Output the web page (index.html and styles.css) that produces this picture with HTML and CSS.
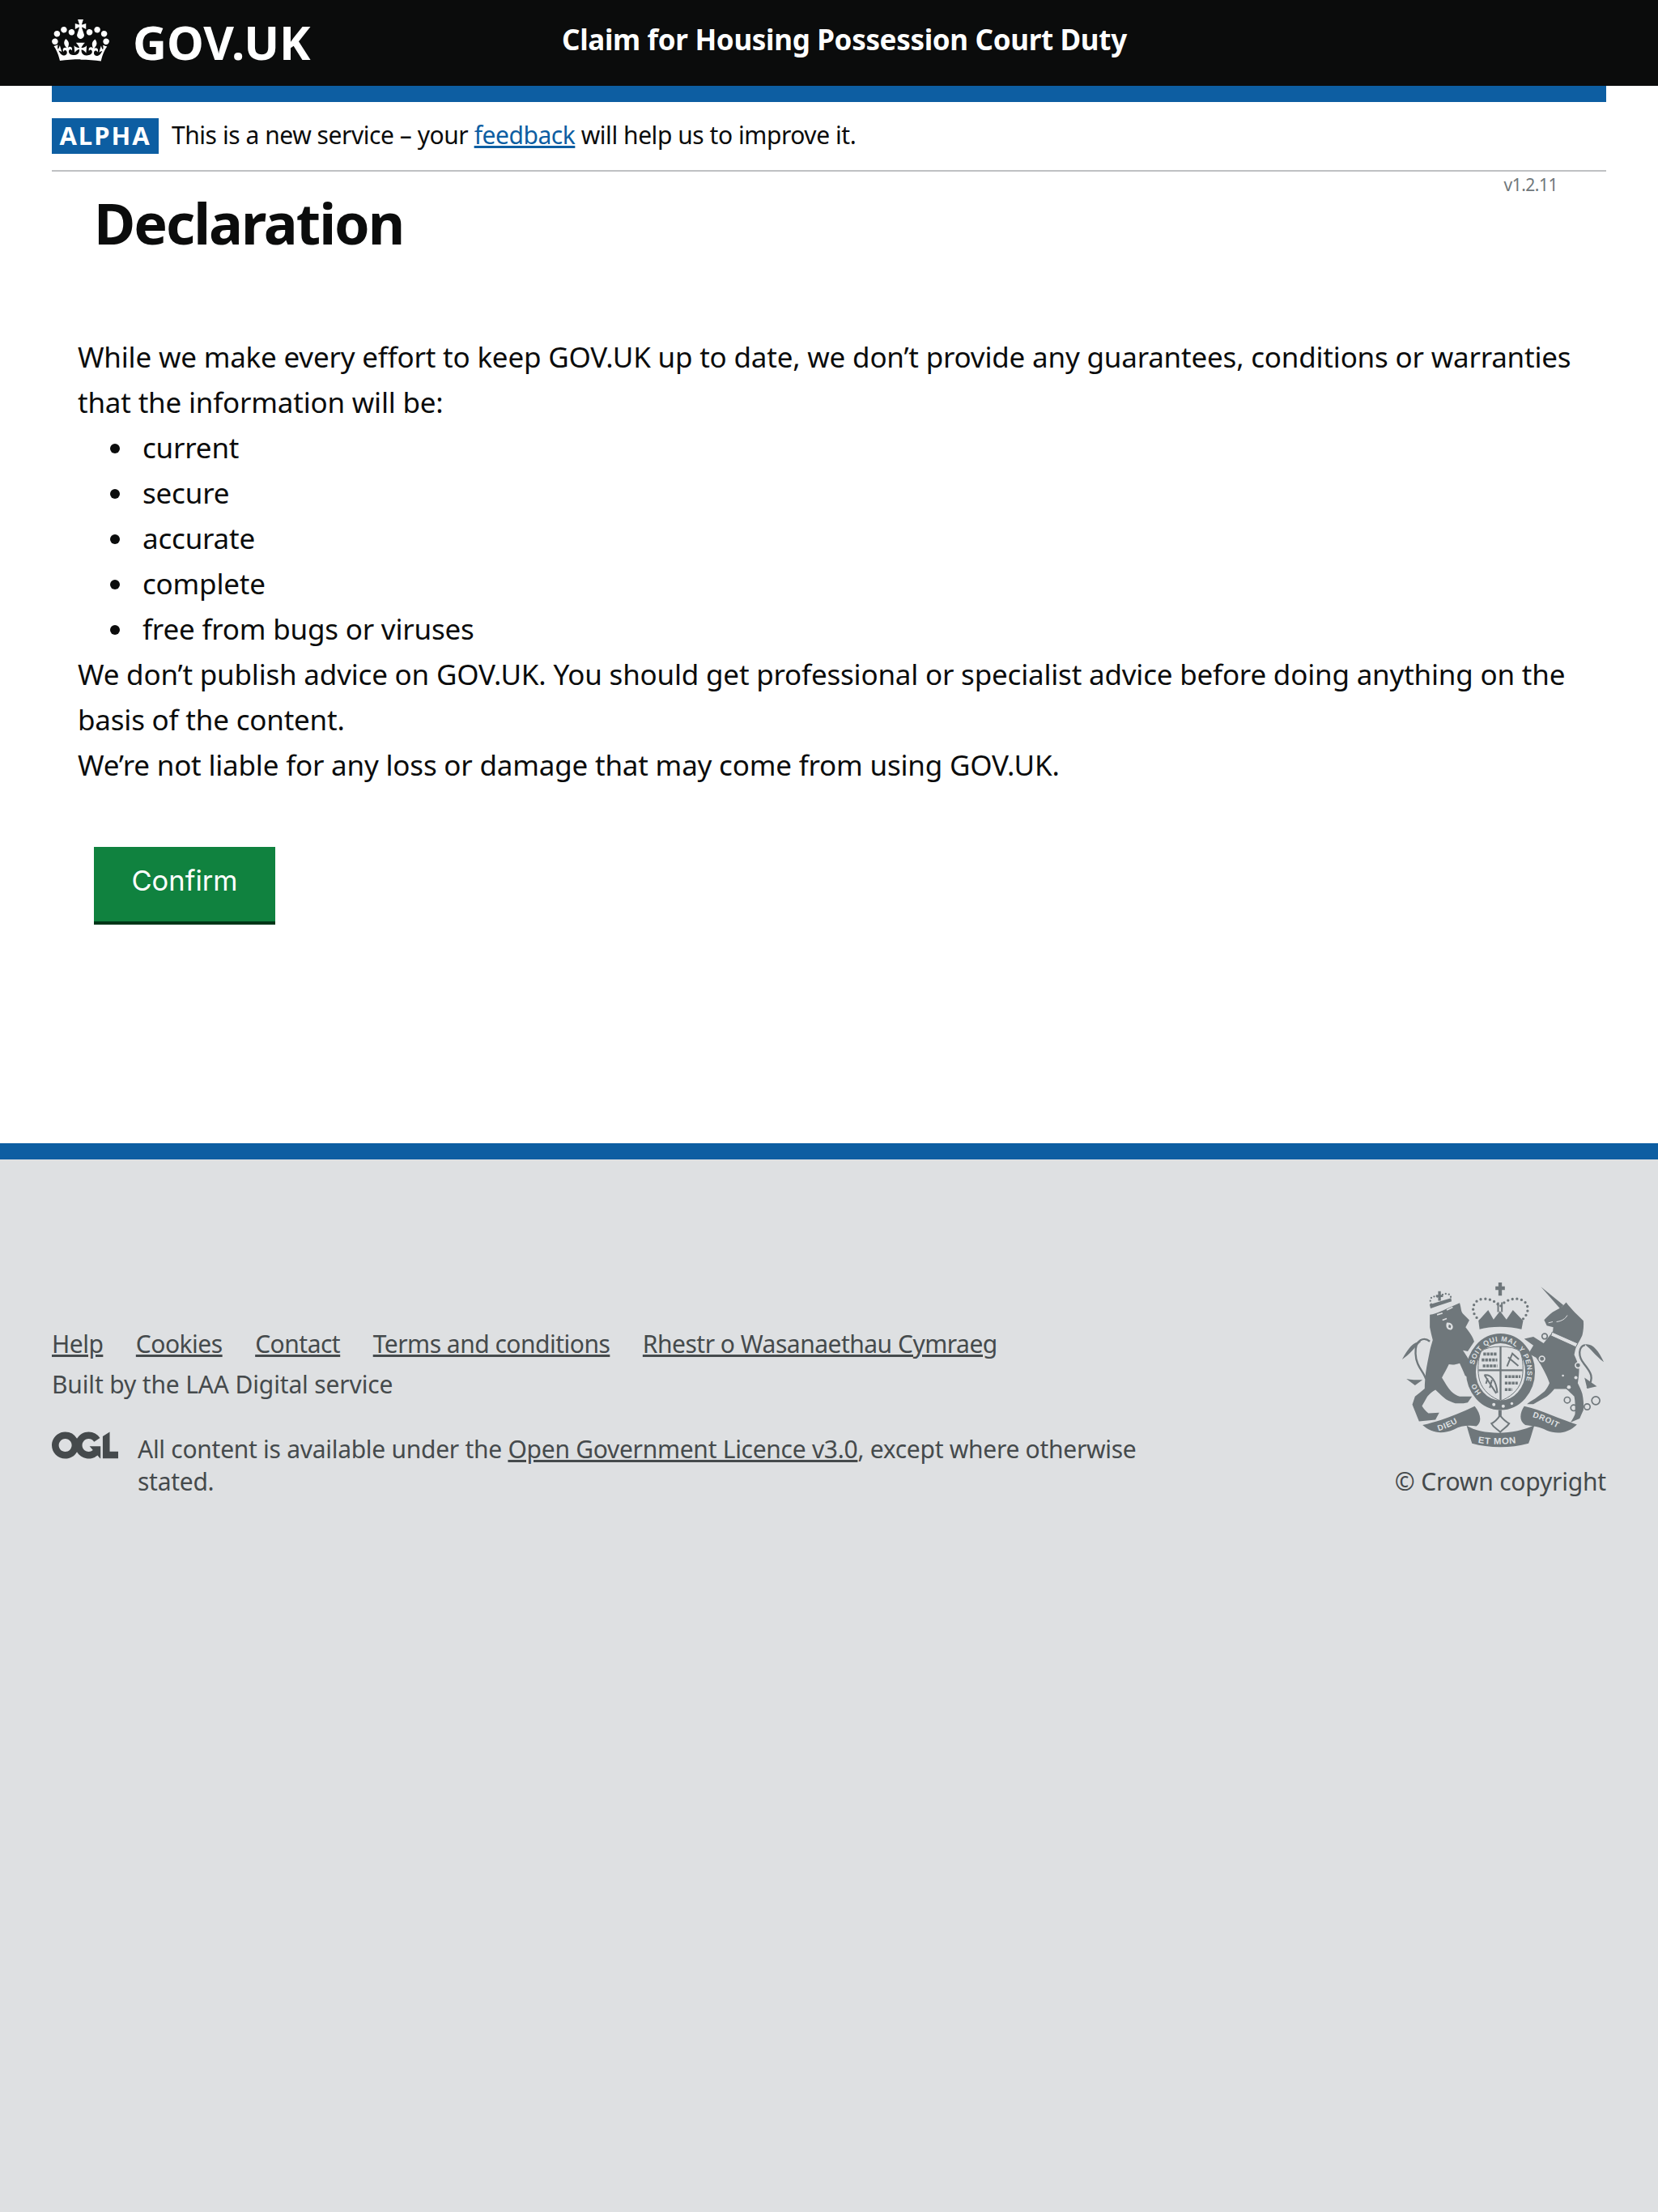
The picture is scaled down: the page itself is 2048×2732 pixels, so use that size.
FILE: index.html
```html
<!DOCTYPE html>
<html lang="en">

<head>
    <meta charset="UTF-8">
    <meta name="viewport" content="width=device-width, initial-scale=1.0">
    <title>Declaration - Claim for Housing Possession Court Duty</title>
    <link rel="stylesheet" href="styles.css">
</head>

<body>
    <header class="site-header">
        <a class="logo" href="#">
            <svg class="crown" viewBox="0 0 132 97" aria-hidden="true">
                <path fill="currentColor" d="M25 30.2c3.5 1.5 7.7-.2 9.1-3.7 1.5-3.6-.2-7.8-3.9-9.2-3.6-1.4-7.6.3-9.1 3.9-1.4 3.5.3 7.5 3.9 9zM9 39.5c3.6 1.5 7.8-.2 9.2-3.7 1.5-3.6-.2-7.8-3.9-9.1-3.6-1.5-7.6.2-9.1 3.8-1.4 3.5.3 7.5 3.8 9zM4.4 57.2c3.5 1.5 7.7-.2 9.1-3.8 1.5-3.6-.2-7.7-3.9-9.1-3.5-1.5-7.6.3-9.1 3.8-1.4 3.5.3 7.6 3.9 9.1zm38.3-21.4c3.5 1.5 7.7-.2 9.1-3.8 1.5-3.6-.2-7.7-3.9-9.1-3.6-1.5-7.6.3-9.1 3.8-1.3 3.6.4 7.7 3.9 9.1zm64.4-5.6c-3.6 1.5-7.8-.2-9.1-3.7-1.5-3.6.2-7.8 3.8-9.2 3.6-1.4 7.7.3 9.2 3.9 1.3 3.5-.4 7.5-3.9 9zm15.9 9.3c-3.6 1.5-7.7-.2-9.1-3.7-1.5-3.6.2-7.8 3.7-9.1 3.6-1.5 7.7.2 9.2 3.8 1.5 3.5-.3 7.5-3.8 9zm4.7 17.7c-3.6 1.5-7.8-.2-9.2-3.8-1.5-3.6.2-7.7 3.9-9.1 3.6-1.5 7.7.3 9.2 3.8 1.3 3.5-.4 7.6-3.9 9.1zM89.3 35.8c-3.6 1.5-7.8-.2-9.2-3.8-1.4-3.6.2-7.7 3.9-9.1 3.6-1.5 7.7.3 9.2 3.8 1.4 3.6-.3 7.7-3.9 9.1zM69.7 17.7l8.9 4.7V9.3l-8.9 2.8c-.2-.3-.5-.6-.9-.9L72.4 0H59.6l3.6 11.2c-.3.3-.6.5-.9.9l-8.8-2.8v13.1l8.8-4.7c.3.3.6.7.9.9l-5 15.4v.1c-.2.8-.4 1.6-.4 2.4 0 4.1 3.1 7.5 7 8.1h.2c.3 0 .7.1 1 .1.4 0 .7 0 1-.1h.2c4-.6 7.1-4.1 7.1-8.1 0-.8-.1-1.7-.4-2.4V34l-5.1-15.4c.4-.2.7-.6 1-.9zM66 92.8c16.9 0 32.8 1.1 47.1 3.2 4-16.9 8.9-26.7 14-33.5l-9.6-3.4c1 4.9 1.1 7.2 0 10.2-1.5-1.4-3-4.3-4.2-8.7L108.6 76c2.8-2 5-3.2 7.5-3.3-4.4 9.4-10 11.9-13.6 11.2-4.3-.8-6.3-4.6-5.6-7.9 1-4.7 5.7-5.9 8-.5 4.3-8.7-3-11.4-7.6-8.8 7.1-7.2 7.9-13.5 2.1-21.1-8 6.1-8.1 12.3-4.5 20.8-4.7-5.4-12.1-2.5-9.5 6.2 3.4-5.2 7.9-2 7.2 3.1-.6 4.3-6.4 7.8-13.5 7.2-10.3-.9-10.9-8-11.2-13 2.5-.5 7.1 1.8 11 7.3L80.2 60c-4.1 4.4-8 5.3-12.3 5.4 1.4-4.4 8-11.6 8-11.6H55.5s6.4 7.2 7.9 11.6c-4.2-.1-8-1-12.3-5.4l1.4 16.4c3.9-5.5 8.5-7.7 10.9-7.3-.3 5-.7 12.1-11 13-7.2.6-12.9-2.9-13.5-7.2-.7-5 3.8-8.3 7.1-3.1 2.7-8.7-4.6-11.6-9.4-6.2 3.7-8.5 3.6-14.7-4.6-20.8-5.8 7.6-5 13.9 2.2 21.1-4.7-2.6-11.9.1-7.7 8.8 2.3-5.5 7.1-4.2 8.1.5.7 3.3-1.3 7.1-5.7 7.9-3.5.7-9-1.8-13.5-11.2 2.5.1 4.7 1.3 7.5 3.3l-4.7-15.4c-1.2 4.4-2.7 7.2-4.3 8.7-1.1-3-.9-5.3 0-10.2l-9.5 3.4c5 6.9 9.9 16.7 14 33.5 14.8-2.1 30.8-3.2 47.7-3.2z" />
            </svg>
            <span class="logo-text">GOV.UK</span>
        </a>
        <a class="service-name" href="#">Claim for Housing Possession Court Duty</a>
    </header>

    <div class="container">
        <div class="blue-bar"></div>

        <div class="phase-banner">
            <strong class="phase-tag">ALPHA</strong>
            <span class="phase-text">This is a new service – your <a href="#">feedback</a> will help us to improve it.</span>
        </div>

        <p class="version">v1.2.11</p>

        <main>
            <h1>Declaration</h1>

            <div class="declaration">
                <p>While we make every effort to keep GOV.UK up to date, we don’t provide any guarantees, conditions or warranties that the information will be:</p>
                <ul>
                    <li>current</li>
                    <li>secure</li>
                    <li>accurate</li>
                    <li>complete</li>
                    <li>free from bugs or viruses</li>
                </ul>
                <p>We don’t publish advice on GOV.UK. You should get professional or specialist advice before doing anything on the basis of the content.</p>
                <p>We’re not liable for any loss or damage that may come from using GOV.UK.</p>
            </div>

            <button class="confirm" type="submit">Confirm</button>
        </main>
    </div>

    <footer class="site-footer">
        <div class="footer-inner">
            <div class="footer-meta">
                <ul class="footer-links">
                    <li><a href="#">Help</a></li>
                    <li><a href="#">Cookies</a></li>
                    <li><a href="#">Contact</a></li>
                    <li><a href="#">Terms and conditions</a></li>
                    <li><a href="#">Rhestr o Wasanaethau Cymraeg</a></li>
                </ul>
                <p class="built-by">Built by the LAA Digital service</p>
                <div class="licence">
                    <svg class="ogl" viewBox="0 0 483.2 195.7" aria-hidden="true">
                        <path fill="currentColor" d="M421.5 142.8V.1l-50.7 32.3v161.1h112.4v-50.7zm-122.3-9.6A47.12 47.12 0 0 1 221 97.8c0-26 21.1-47.1 47.1-47.1 16.7 0 31.4 8.7 39.7 21.8l42.7-27.2A97.63 97.63 0 0 0 268.1 0c-36.5 0-68.3 20.1-85.1 49.7A98 98 0 0 0 97.8 0C43.9 0 0 43.9 0 97.8s43.9 97.8 97.8 97.8c36.5 0 68.3-20.1 85.1-49.7a97.76 97.76 0 0 0 149.6 25.4l19.4 22.2h3v-87.8h-80l24.3 27.5zM97.8 145c-26 0-47.1-21.1-47.1-47.1s21.1-47.1 47.1-47.1 47.2 21 47.2 47S123.8 145 97.8 145" />
                    </svg>
                    <p>All content is available under the <a href="#">Open Government Licence v3.0</a>, except where otherwise stated.</p>
                </div>
            </div>

            <div class="copyright">
                <svg class="crest" viewBox="100 60 760 620" aria-hidden="true">
                    <!-- lion -->
                    <g class="crest-fill">
                        <path d="M205 186C225 182 250 172 270 162L316 142C322 160 320 172 328 182L352 206 338 232C352 250 366 268 370 286L346 322 328 318C345 345 362 370 376 396L358 426 336 412C330 395 322 380 316 366 300 372 288 372 276 370 268 388 258 404 250 420 262 440 272 458 284 470 294 480 304 486 316 490L362 490 346 512C330 516 314 516 300 515 288 512 276 506 265 500 250 488 238 476 226 465 214 472 204 480 196 490L176 525C182 535 190 545 200 552L240 550 226 576 165 582C156 560 148 540 140 520L150 490C162 480 174 470 186 460 186 440 188 420 190 400 194 372 200 346 205 320 208 306 212 294 216 280 212 264 208 248 205 232Z" />
                        <path d="M204 148 284 124 286 136 208 162Z" />
                        <path d="M228 112H236V98H246V112H254V120H246V134H236V120H228Z" />
                        <path d="M102 352C125 310 145 285 172 286 150 305 130 335 102 352ZM118 424C135 428 155 428 178 428L150 448C140 440 128 432 118 424Z" />
                    </g>
                    <path class="crest-line" d="M205 285C185 268 150 275 152 330 154 380 182 395 190 425" />
                    <path class="crest-dots small" d="M210 146C198 120 222 112 240 122 256 100 290 104 282 130" />
                    <path class="crest-cut" d="M232 186 252 180M268 168 290 158M252 206 268 200" />
                    <path class="crest-bg" d="M268 215C290 212 298 235 284 242 270 244 262 230 268 215Z" />
                    <path class="crest-fill" d="M276 222 284 226 282 236 274 232Z" />

                    <!-- unicorn -->
                    <g class="crest-fill">
                        <path d="M618 82 702 150 690 164Z" />
                        <path d="M630 205C640 195 650 185 662 176 672 170 684 164 695 158L712 140C722 154 734 166 745 178L776 208C778 226 776 244 772 262 766 276 758 290 750 302 746 314 744 324 742 335 750 352 756 368 760 385 760 404 758 422 755 440 762 454 768 466 772 480 776 500 778 520 776 540L762 572 728 586C736 574 742 564 745 555 746 530 746 510 742 490 732 480 722 470 712 462L668 462C660 472 650 482 640 490L590 518 566 518C576 510 586 504 596 498 608 488 620 480 632 470 640 460 646 450 650 440 644 424 638 410 630 395 622 378 612 362 600 345L572 330 590 300 556 275 590 268 628 292 652 262 662 252 664 232 640 226Z" />
                        <path d="M852 362C832 320 812 292 782 296 806 315 818 335 852 362ZM826 452 780 420 790 460Z" />
                    </g>
                    <path class="crest-line" d="M782 298C756 305 756 340 778 368 802 398 820 420 790 458" />
                    <path class="crest-collar" d="M660 250 755 292 748 306 655 264Z" />
                    <path class="crest-cut thin" d="M676 212C695 210 710 200 716 188M646 216 662 212" />
                    <g class="crest-ring">
                        <circle cx="716" cy="503" r="11" />
                        <circle cx="740" cy="532" r="11" />
                        <circle cx="790" cy="528" r="11" />
                        <circle cx="822" cy="505" r="15" />
                        <circle cx="632" cy="266" r="10" />
                    </g>
                    <circle class="crest-link" cx="622" cy="350" r="10" />
                    <circle class="crest-link" cx="756" cy="374" r="10" />
                    <g class="crest-bg">
                        <circle cx="748" cy="420" r="6" />
                        <circle cx="722" cy="455" r="7" />
                        <circle cx="700" cy="412" r="4" />
                    </g>

                    <!-- royal crown -->
                    <g class="crest-fill">
                        <path d="M449 80H460V66H473V80H484V94H473V115H460V94H449ZM456 140H462V176H456ZM470 140H476V176H470Z" />
                        <path d="M386 208 422 168 442 204 466 172 490 204 514 168 552 208 546 240C500 228 430 228 390 240Z" />
                    </g>
                    <path class="crest-dots" d="M392 208C352 180 360 130 404 127 432 126 452 138 466 156 480 138 504 124 532 127 576 132 582 180 544 208" />

                    <!-- shield and garter -->
                    <ellipse class="garter" cx="468" cy="398" rx="110" ry="124" />
                    <path class="shield" d="M396 322C420 298 516 298 540 322 554 350 554 400 546 430 534 470 500 494 468 506 436 494 402 470 390 430 382 400 382 350 396 322Z" />
                    <path class="crest-line" d="M468 304V504M386 392H550" />
                    <path class="charge" d="M404 332H456M398 354H456M402 376H456M484 416H542M484 440H532M484 464H512" />
                    <path class="charge-thin" d="M492 378 512 330 536 352M496 344 534 376M408 410 452 478M408 410C432 406 452 430 456 476M420 422 414 442M436 428 428 458" />
                    <defs>
                        <path id="garter-arc" d="M370 372A100 114 0 1 1 532 485" />
                        <path id="garter-low" d="M396 476A100 114 0 0 1 370 424" />
                        <path id="motto-left" d="M238 618C270 608 310 590 344 562" />
                        <path id="motto-mid" d="M384 662C430 670 500 670 552 658" />
                        <path id="motto-right" d="M586 566C620 576 670 600 708 622" />
                    </defs>
                    <text class="garter-text"><textPath href="#garter-arc">SOIT QUI MAL Y PENSE</textPath></text>
                    <text class="garter-text"><textPath href="#garter-low">HO</textPath></text>
                    <g class="crest-bg">
                        <circle cx="443" cy="520" r="6" />
                        <circle cx="478" cy="526" r="6" />
                        <circle cx="510" cy="516" r="5" />
                    </g>

                    <!-- motto scroll -->
                    <g class="crest-fill">
                        <path d="M178 596C250 580 310 555 372 526 395 555 400 585 378 600 350 596 320 598 295 612 250 632 210 625 178 596Z" />
                        <path d="M556 526C620 540 690 575 752 594 720 625 680 632 640 616 610 602 590 600 560 596 535 580 540 550 556 526Z" />
                        <path d="M342 598C400 634 520 634 594 596 586 620 582 640 572 664 500 684 420 680 362 664 354 640 348 620 342 598Z" />
                        <path d="M460 540H472V562H460Z" />
                    </g>
                    <path class="fleur" d="M466 560C478 575 490 585 500 590 490 606 476 610 467 622 456 610 442 606 434 590 446 585 456 575 466 560Z" />
                    <text class="motto-text"><textPath href="#motto-left">DIEU</textPath></text>
                    <text class="motto-text mid"><textPath href="#motto-mid">ET MON</textPath></text>
                    <text class="motto-text"><textPath href="#motto-right">DROIT</textPath></text>
                </svg>
                <p>© Crown copyright</p>
            </div>
        </div>
    </footer>
</body>

</html>
```

FILE: styles.css
```css
* {
    box-sizing: border-box;
}

html,
body {
    margin: 0;
    height: 100%;
}

body {
    font-family: "Noto Sans", Arial, sans-serif;
    color: #0b0c0c;
    background-color: #fff;
    display: flex;
    flex-direction: column;
    min-height: 2732px;
}

a {
    color: inherit;
}

p {
    margin: 0;
}

/* header */
.site-header {
    background-color: #0b0c0c;
    color: #fff;
    height: 106px;
    padding: 0 64px;
    display: flex;
    align-items: center;
}

.logo {
    display: flex;
    align-items: center;
    color: #fff;
    text-decoration: none;
    width: 630px;
}

.crown {
    width: 71px;
    height: 52px;
    margin: 0 29px 6px 0;
}

.logo-text {
    font-size: 58px;
    font-weight: 700;
    line-height: 1;
    padding-bottom: 2px;
}

.service-name {
    color: #fff;
    font-size: 35px;
    font-weight: 700;
    letter-spacing: -0.33px;
    text-decoration: none;
    padding-bottom: 10px;
}

.container {
    margin: 0 64px;
}

.blue-bar {
    height: 20px;
    background-color: #0d5ea2;
}

/* phase banner */
.phase-banner {
    display: flex;
    align-items: center;
    height: 86px;
    border-bottom: 2px solid #bfc1c3;
    font-size: 30px;
    color: #0b0c0c;
}

.phase-text {
    letter-spacing: -0.45px;
    padding-bottom: 3px;
}

.phase-banner a {
    color: #0d5ea2;
}

.phase-tag {
    background-color: #0d5ea2;
    color: #fff;
    font-size: 31px;
    line-height: 42px;
    height: 44px;
    width: 132px;
    text-align: center;
    letter-spacing: 2px;
    margin-right: 16px;
}

.version {
    text-align: right;
    color: #6f777b;
    font-size: 21px;
    letter-spacing: -0.5px;
    line-height: 24px;
    padding: 4px 60px 0 0;
}

/* main content */
h1 {
    font-size: 70px;
    font-weight: 700;
    letter-spacing: -2px;
    line-height: 70px;
    margin: 0 0 103px 52px;
}

.declaration {
    font-size: 35px;
    letter-spacing: -0.2px;
    line-height: 56px;
    padding-left: 32px;
}

.declaration ul {
    margin: 0;
    padding-left: 71px;
}

.declaration li {
    padding-left: 9px;
}

.confirm {
    display: block;
    margin: 73px 0 270px 52px;
    width: 224px;
    height: 96px;
    padding: 0 0 10px;
    background-color: #10823f;
    color: #fff;
    border: none;
    border-bottom: 4px solid #003618;
    font-family: Inter, "Noto Sans", sans-serif;
    font-size: 34.5px;
    cursor: pointer;
}

/* footer */
.site-footer {
    flex: 1;
    background-color: #dee0e2;
    border-top: 20px solid #0d5ea2;
    color: #454a4c;
    font-size: 30px;
}

.footer-inner {
    display: flex;
    justify-content: space-between;
    align-items: flex-start;
    padding: 150px 64px 0;
}

.footer-meta {
    width: 1340px;
    padding-top: 56px;
}

.footer-links {
    list-style: none;
    margin: 0;
    padding: 0;
    display: flex;
    gap: 40.5px;
    line-height: 44px;
    letter-spacing: -0.5px;
}

.built-by {
    line-height: 40px;
    margin-top: 8px;
    letter-spacing: -0.15px;
}

.licence {
    display: flex;
    align-items: flex-start;
    margin-top: 38px;
    line-height: 40px;
    letter-spacing: -0.28px;
}

.licence p {
    margin-top: 2px;
}

.ogl {
    flex: none;
    width: 82px;
    height: 34px;
    margin-right: 24px;
}

.copyright {
    text-align: right;
    line-height: 40px;
    letter-spacing: -0.2px;
}

/* crest */
.crest {
    display: block;
    width: 253px;
    height: 206px;
    margin-left: auto;
    margin-bottom: 22px;
}

.crest-fill {
    fill: #6f777b;
}

.crest-line {
    fill: none;
    stroke: #6f777b;
    stroke-width: 7;
}

.crest-cut {
    fill: none;
    stroke: #dee0e2;
    stroke-width: 5;
}

.crest-cut.thin {
    stroke-width: 3;
}

.crest-bg {
    fill: #dee0e2;
}

.crest-collar {
    fill: #dee0e2;
    stroke: #6f777b;
    stroke-width: 3;
}

.crest-ring {
    fill: none;
    stroke: #6f777b;
    stroke-width: 5;
}

.crest-link {
    fill: #6f777b;
    stroke: #dee0e2;
    stroke-width: 5;
}

.crest-dots {
    fill: none;
    stroke: #6f777b;
    stroke-width: 10;
    stroke-linecap: round;
    stroke-dasharray: 0 17;
}

.crest-dots.small {
    stroke-width: 7;
    stroke-dasharray: 0 12;
}

.garter {
    fill: #dee0e2;
    stroke: #6f777b;
    stroke-width: 36;
}

.shield {
    fill: #dee0e2;
    stroke: #6f777b;
    stroke-width: 3;
}

.charge {
    fill: none;
    stroke: #6f777b;
    stroke-width: 11;
    stroke-dasharray: 10 3;
}

.charge-thin {
    fill: none;
    stroke: #6f777b;
    stroke-width: 6;
}

.fleur {
    fill: #dee0e2;
    stroke: #6f777b;
    stroke-width: 6;
}

.garter-text {
    fill: #dee0e2;
    font-family: "Liberation Sans", Arial, sans-serif;
    font-size: 26px;
    font-weight: 700;
    letter-spacing: 2.5px;
}

.motto-text {
    fill: #dee0e2;
    font-family: "Liberation Sans", Arial, sans-serif;
    font-size: 30px;
    font-weight: 700;
    letter-spacing: 2px;
}

.motto-text.mid {
    font-size: 34px;
}
```
